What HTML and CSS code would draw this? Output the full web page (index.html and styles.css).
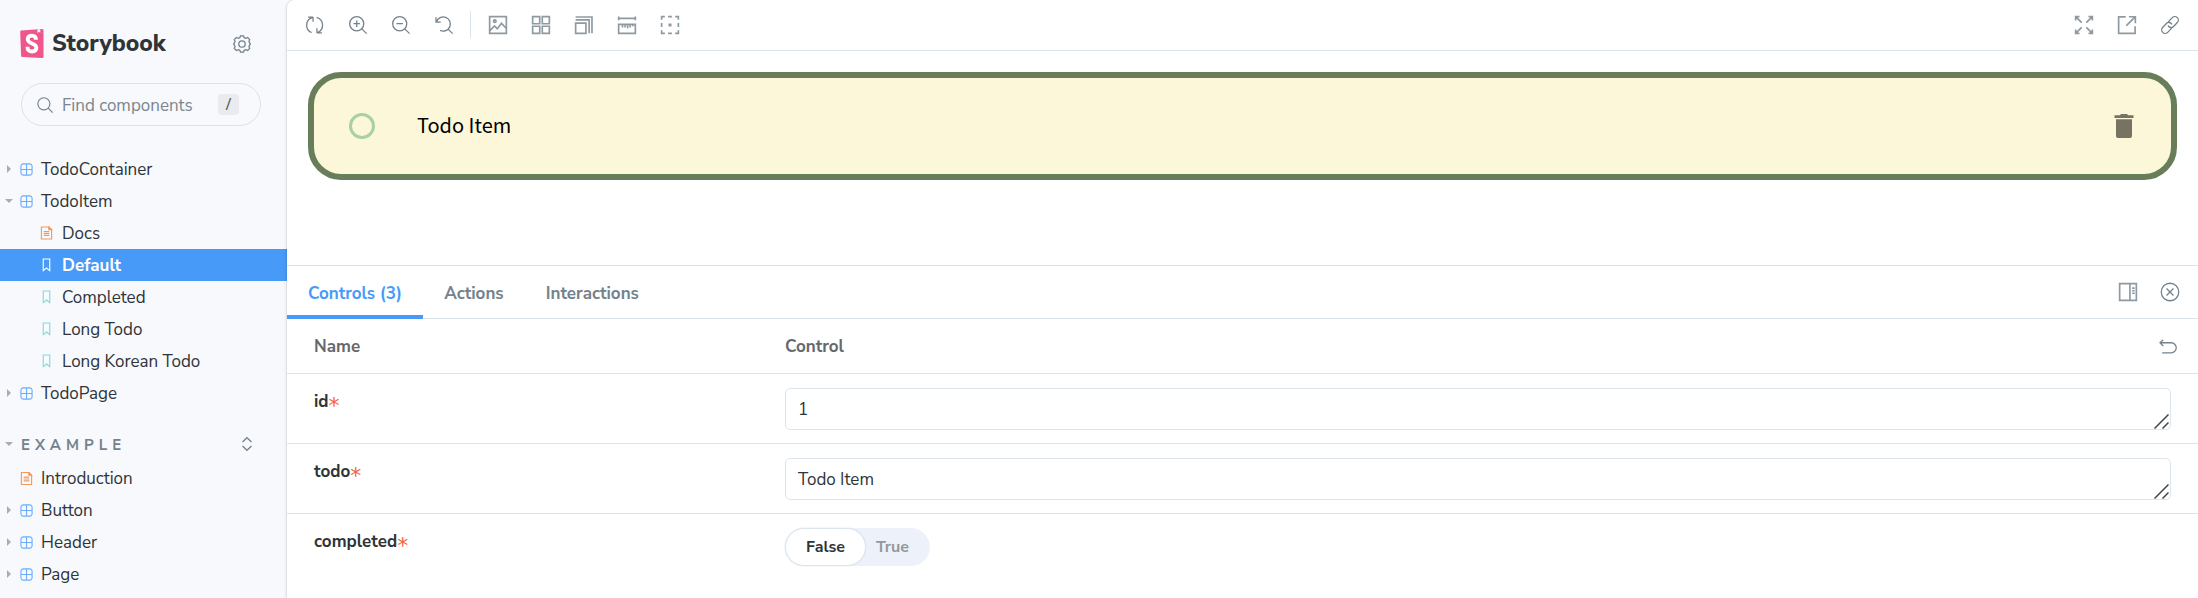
FILE: index.html
```html
<!DOCTYPE html>
<html lang="en">
<head>
<meta charset="utf-8">
<title>TodoItem - Default ⋅ Storybook</title>
<link rel="stylesheet" href="styles.css">
</head>
<body>
<svg class="sprite" aria-hidden="true">
  <symbol id="component" viewBox="0 0 14 14"><path d="M3.500 1h7A2.500 2.500 0 0 1 13 3.500v7a2.500 2.500 0 0 1-2.500 2.500h-7A2.500 2.500 0 0 1 1 10.500v-7A2.500 2.500 0 0 1 3.500 1zM7 1v12M1 7h12"/></symbol>
  <symbol id="document" viewBox="0 0 14 14"><path d="M1.500.5h8l3 3v10h-11zM4 5.500h6M4 7.500h6M4 9.500h6"/><path class="solid" d="M9.500.5l3 3h-3z"/></symbol>
  <symbol id="bookmark" viewBox="0 0 14 14"><path d="M3.500.5h7v12.500L7 10.200 3.500 13z"/></symbol>
</svg>
<div class="app">
  <aside class="sidebar">
    <header class="brand-row">
      <a class="brand" href="#">
        <svg class="brand-mark" viewBox="0 0 24 29"><path fill="#f0568a" d="M.2 2.700Q.2 1.700 1.300 1.600L22 .1Q23.500 0 23.500 1.500v26q0 1.500-1.500 1.500L2.500 28.100Q1.200 28 1.100 26.700z"/><path fill="#fff" d="M17.500.4l2.700-.2.100 3.500-1.300-1-1.600 1.200z"/><path fill="none" stroke="#fff" stroke-width="3.800" d="M16 10.800C16 8 14.700 6.700 12 6.700S7.700 8 7.700 10.300c0 4.800 8.700 3.500 8.700 8.300 0 2.400-1.600 3.900-4.300 3.900-3.200 0-4.700-1.700-4.600-4.800"/></svg>
        <span>Storybook</span>
      </a>
      <button class="icon-button" aria-label="Settings"><svg class="icon" viewBox="0 0 14 14"><circle cx="7" cy="7" r="2.500"/><path d="M5.800.6h2.400l.5 1.500 1.200.5 1.500-.7 1.600 1.700-.6 1.400.5 1.200.6.800-.6.800-.5 1.200.6 1.400-1.600 1.700-1.500-.7-1.200.5-.5 1.500H5.800l-.5-1.500-1.200-.5-1.500.7L1 10.400 1.600 9l-.5-1.200L.5 7l.6-.8L1.600 5 1 3.600l1.600-1.700 1.500.7 1.200-.5z"/></svg></button>
    </header>
    <div class="search">
      <label for="find" aria-label="Find components"><svg class="icon" viewBox="0 0 14 14"><circle cx="6" cy="6" r="5.300"/><path d="M9.800 9.800l3.900 3.900"/></svg></label>
      <input id="find" type="search" placeholder="Find components">
      <kbd>/</kbd>
    </div>
    <nav class="tree">
      <a class="node" href="#"><i class="caret"></i><svg class="type blue"><use href="#component"/></svg>TodoContainer</a>
      <a class="node" href="#"><i class="caret open"></i><svg class="type blue"><use href="#component"/></svg>TodoItem</a>
      <a class="node child" href="#"><svg class="type orange"><use href="#document"/></svg>Docs</a>
      <a class="node child selected" href="#"><svg class="type"><use href="#bookmark"/></svg>Default</a>
      <a class="node child" href="#"><svg class="type teal"><use href="#bookmark"/></svg>Completed</a>
      <a class="node child" href="#"><svg class="type teal"><use href="#bookmark"/></svg>Long Todo</a>
      <a class="node child" href="#"><svg class="type teal"><use href="#bookmark"/></svg>Long Korean Todo</a>
      <a class="node" href="#"><i class="caret"></i><svg class="type blue"><use href="#component"/></svg>TodoPage</a>
    </nav>
    <div class="group">
      <button class="group-name"><i class="caret open"></i>EXAMPLE</button>
      <button class="expand" aria-label="Expand all"><svg viewBox="0 0 14 14"><path d="M2.500 5L7 .7 11.500 5M2.500 9L7 13.300 11.500 9"/></svg></button>
    </div>
    <nav class="tree">
      <a class="node" href="#"><i class="caret none"></i><svg class="type orange"><use href="#document"/></svg>Introduction</a>
      <a class="node" href="#"><i class="caret"></i><svg class="type blue"><use href="#component"/></svg>Button</a>
      <a class="node" href="#"><i class="caret"></i><svg class="type blue"><use href="#component"/></svg>Header</a>
      <a class="node" href="#"><i class="caret"></i><svg class="type blue"><use href="#component"/></svg>Page</a>
    </nav>
  </aside>

  <main class="main">
    <div class="toolbar">
      <button class="icon-button" aria-label="Remount"><svg class="icon" viewBox="0 0 14 14"><path d="M5.500.8v3.700M5.500.8H1.600M5.300 1A6.300 6.300 0 0 0 4.300 12.900M8.500 13.200V9.500M8.500 13.200h3.900M8.700 13A6.300 6.300 0 0 0 8.300 1"/></svg></button>
      <button class="icon-button" aria-label="Zoom in"><svg class="icon" viewBox="0 0 14 14"><circle cx="6" cy="6" r="5.500"/><path d="M10 10l3.700 3.700M6 3.500v5M3.500 6h5"/></svg></button>
      <button class="icon-button" aria-label="Zoom out"><svg class="icon" viewBox="0 0 14 14"><circle cx="6" cy="6" r="5.500"/><path d="M10 10l3.700 3.700M3.500 6h5"/></svg></button>
      <button class="icon-button" aria-label="Reset zoom"><svg class="icon" viewBox="0 0 14 14"><path d="M.8 1v3.700h3.700M1.200 4.500A5.500 5.500 0 1 1 4 11.200M10 10l3.700 3.700"/></svg></button>
      <span class="divider"></span>
      <button class="icon-button bold" aria-label="Background"><svg class="icon" viewBox="0 0 14 14"><path d="M.5.5h13v13H.5zM.5 11.500l3.800-3.800 2.200 2.200 3.200-4.200 3.800 4"/><circle cx="4.500" cy="4" r="1"/></svg></button>
      <button class="icon-button bold" aria-label="Grid"><svg class="icon" viewBox="0 0 14 14"><path d="M.5.5H6V6H.5zM8 .5h5.500V6H8zM.5 8H6v5.500H.5zM8 8h5.500v5.500H8z"/></svg></button>
      <button class="icon-button bold" aria-label="Viewport"><svg class="icon" viewBox="0 0 14 14"><path d="M.5 5.500h8v8h-8zM.5 3h10.500v10.500M.5.8h12.700v12.700"/></svg></button>
      <button class="icon-button bold" aria-label="Measure"><svg class="icon" viewBox="0 0 14 14"><path d="M.5 1.800h13M.5.3v3M13.500.3v3M.5 6.500h13v7H.5zM3.500 6.500v2.500M5.500 6.500V9M7.500 6.500v3M9.500 6.500V9M11.500 6.500V8"/></svg></button>
      <button class="icon-button bold" aria-label="Outline"><svg class="icon" viewBox="0 0 14 14"><path d="M.5 3V.5H3M5.500.5h3M11 .5h2.500V3M13.500 5.500v3M13.500 11v2.500H11M8.500 13.500h-3M3 13.500H.5V11M.5 8.500v-3"/><path class="solid" d="M6.500 6.500h1v1h-1z"/></svg></button>
      <span class="spacer"></span>
      <button class="icon-button bold" aria-label="Full screen"><svg class="icon" viewBox="0 0 14 14"><path d="M.5 3.500v-3h3M.5.5l4.700 4.700M10.500.5h3v3M13.500.5L8.800 5.200M13.500 10.500v3h-3M13.500 13.500L8.800 8.800M3.500 13.500h-3v-3M.5 13.500l4.700-4.700"/></svg></button>
      <button class="icon-button bold" aria-label="Open in new tab"><svg class="icon" viewBox="0 0 14 14"><path d="M6 .7H.5v12.800h12.800V8M8.500.6h5v5M13.300.7L6.500 7.500"/></svg></button>
      <button class="icon-button" aria-label="Copy link"><svg class="icon" viewBox="0 0 14 14"><path d="M5.500 4.800l3.300-3.500a2.700 2.700 0 0 1 3.900 3.800L9.800 8.200a2.700 2.700 0 0 1-4.300-.7M8.500 9.200l-3.300 3.500a2.700 2.700 0 0 1-3.900-3.800l2.900-3.100a2.700 2.700 0 0 1 4.300.7"/></svg></button>
    </div>

    <section class="canvas">
      <article class="todo">
        <button class="check" aria-label="Complete"></button>
        <span class="todo-text">Todo Item</span>
        <button class="delete" aria-label="Delete"><svg viewBox="0 0 20 24"><path d="M.5 1.200h5.400L7 0h6l1.100 1.200h5.400V4H.5zM2 5.200h16v16.200Q18 24 15.400 24H4.600Q2 24 2 21.400z"/></svg></button>
      </article>
    </section>

    <section class="panel">
      <div class="tabs">
        <button class="tab active">Controls (3)</button>
        <button class="tab">Actions</button>
        <button class="tab">Interactions</button>
        <span class="spacer"></span>
        <button class="icon-button bold" aria-label="Change orientation"><svg class="icon" viewBox="0 0 14 14"><path d="M.5.5h13v13H.5zM8.500.5v13M10.200 4h2M10.200 6h2M10.200 8h2"/></svg></button>
        <button class="icon-button" aria-label="Hide addons"><svg class="icon" viewBox="0 0 14 14"><circle cx="7" cy="7" r="6.800"/><path d="M4.300 4.300l5.400 5.400M9.700 4.300L4.300 9.700"/></svg></button>
      </div>
      <table class="args">
        <thead>
          <tr><th>Name</th><th><div class="head">Control<button class="icon-button" aria-label="Reset controls"><svg class="icon" viewBox="0 0 14 14"><path d="M3.300 1.400L.8 3.700l2.500 2.500M1 3.700h8.500a3.900 3.900 0 0 1 0 7.800H2.500"/></svg></button></div></th></tr>
        </thead>
        <tbody>
          <tr><td><label for="id">id<span class="required">*</span></label></td>
            <td><div class="field"><textarea id="id" rows="1">1</textarea><svg class="grip" viewBox="0 0 15 15"><path d="M.5 14.500l14-14M8.500 14.500l6-6"/></svg></div></td></tr>
          <tr><td><label for="todo">todo<span class="required">*</span></label></td>
            <td><div class="field"><textarea id="todo" rows="1">Todo Item</textarea><svg class="grip" viewBox="0 0 15 15"><path d="M.5 14.500l14-14M8.500 14.500l6-6"/></svg></div></td></tr>
          <tr><td><label for="completed">completed<span class="required">*</span></label></td>
            <td><label class="toggle"><input id="completed" type="checkbox"><span class="off">False</span><span class="on">True</span></label></td></tr>
        </tbody>
      </table>
    </section>
  </main>
</div>
</body>
</html>
```
FILE: styles.css
```css
* { box-sizing: border-box; }
body {
  margin: 0;
  color: #2e3438;
  background: #f7f9fd;
  font: 17px/20px "Nunito Sans", Nunito, Lato, "Open Sans", sans-serif;
}
button, input, textarea { font: inherit; color: inherit; }
button { padding: 0; border: 0; background: none; }
a { color: inherit; text-decoration: none; }
svg { display: block; flex: none; fill: none; stroke: currentColor; }
.sprite { position: absolute; width: 0; height: 0; }
.solid { fill: currentColor; }
.spacer { flex: 1; }

.app { display: flex; height: 100vh; overflow: hidden; background: #f7f9fd; }

.sidebar { flex: none; width: 287px; }
.brand-row { display: flex; align-items: center; justify-content: space-between; padding: 28px 35px 0 20px; height: 59px; }
.brand { display: flex; align-items: center; gap: 8px; font-size: 23px; font-weight: 800; line-height: 30px; }
.brand-mark { width: 24px; height: 29px; stroke: none; }
.icon-button { display: flex; align-items: center; justify-content: center; color: #73828c; width: 20px; height: 32px; }
.icon { width: 18px; height: 18px; overflow: visible; }
.bold .icon { opacity: 0.8; stroke-width: 1.300; }

.search {
  display: flex; align-items: center; gap: 8px;
  height: 43px; margin: 24px 26px 27px 21px; padding: 0 21px 0 15px;
  border: 1px solid #dbe2e8; border-radius: 22px; color: #73828c;
}
.search .icon { width: 16px; height: 16px; }
.search input { flex: 1; min-width: 0; padding: 2px 0 0 1px; border: 0; outline: 0; background: none; }
.search input::placeholder { color: #7b868e; opacity: 1; }
kbd { width: 21px; height: 21px; border-radius: 4px; background: #e9ebef; color: #50565a; font: 16px/21px "Open Sans", sans-serif; text-align: center; }

.node { display: flex; align-items: center; height: 32px; padding: 2px 0 0 7px; }
.child { padding-left: 40px; }
.caret { flex: none; width: 13px; padding-bottom: 2px; }
.caret::before { content: ""; display: block; width: 0; border: 4px solid transparent; border-left-color: #a7adb3; border-right-width: 0; }
.caret.open::before { border: 4px solid transparent; border-top-color: #a7adb3; border-bottom-width: 0; margin-left: -2px; }
.caret.none::before { border-color: transparent; }
.type { width: 13px; height: 13px; margin: 0 8px 2px 0; overflow: visible; stroke-width: 1.200; }
.child .type { height: 14px; margin-right: 9px; }
.blue { color: #6aaefb; }
.orange { color: #f39a56; }
.teal { color: #7edcd9; }
.selected { background: #479af7; color: #fff; font-weight: 700; }

.group { display: flex; align-items: center; justify-content: space-between; height: 32px; margin: 19px 33px 2px 7px; color: #73828c; }
.group-name { display: flex; align-items: center; font-size: 15px; font-weight: 700; letter-spacing: 5px; padding-top: 2px; }
.group-name .caret { width: 14px; }
.expand svg { width: 14px; height: 14px; stroke-width: 1.300; }

.main {
  display: flex; flex-direction: column; flex: 1; min-width: 0;
  background: #fff; border-top-left-radius: 8px;
  box-shadow: 0 0 0 1px rgba(0, 0, 0, 0.06), 0 1px 5px rgba(0, 0, 0, 0.1);
}
.toolbar { display: flex; flex: none; align-items: center; gap: 23px; height: 51px; padding: 0 18px 1px; border-bottom: 1px solid #dce5eb; }
.divider { width: 1px; height: 27px; margin: 0 -7px; background: #dce5eb; }
.toolbar .divider + .icon-button { margin-left: 1px; }

.canvas { flex: none; height: 214px; padding: 21px; }
.todo { display: flex; align-items: center; height: 108px; padding: 0 37px 0 35px; border: 6px solid #687d5a; border-radius: 33px; background: #fdf7da; }
.check { width: 26px; height: 26px; border: 3px solid #a8cfa5; border-radius: 50%; }
.todo-text { flex: 1; margin-left: 42px; padding-bottom: 2px; color: #000; font: 20px/28px "Noto Sans CJK KR", sans-serif; }
.delete svg { width: 20px; height: 24px; fill: #767363; stroke: none; }

.panel { flex: 1; border-top: 1px solid #dce2e7; }
.tabs { display: flex; align-items: center; gap: 22px; height: 53px; padding-right: 18px; border-bottom: 1px solid #dce5eb; }
.tab { align-self: stretch; height: 53px; padding: 2px 21px 0 21px; margin-right: -22px; border-bottom: 4px solid transparent; border-top: 4px solid transparent; color: #73828c; font-weight: 700; }
.active { border-bottom-color: #479af7; color: #479af7; }

.args { width: 100%; border-collapse: collapse; table-layout: fixed; }
.args th { height: 54px; padding: 2px 20px 0 27px; border-bottom: 1px solid #dfe4e8; color: #66696c; text-align: left; font-weight: 700; }
.args th:first-child { width: 471px; }
.head { display: flex; align-items: center; justify-content: space-between; }
.args td { height: 70px; padding: 14px 27px 13px; vertical-align: top; border-bottom: 1px solid #dfe4e8; }
.args tr:last-child td { border: 0; }
.args td:first-child { padding-top: 18px; font-weight: 700; }
.required { display: inline-block; height: 12px; padding-top: 4px; color: #f6623b; font: 22px/20px "DejaVu Sans", sans-serif; vertical-align: top; }
.field { position: relative; }
.field textarea { display: block; width: 100%; height: 42px; padding: 11px 12px 9px; border: 1px solid #dce5eb; border-radius: 5px; resize: none; overflow: hidden; outline: 0; background: #fff; }
.grip { position: absolute; right: 2px; bottom: 1px; width: 15px; height: 15px; color: #444; stroke-width: 1.500; }
.toggle { display: inline-flex; height: 38px; border-radius: 19px; background: #edf2fa; font-size: 16px; font-weight: 700; line-height: 36px; }
.toggle input { position: absolute; opacity: 0; }
.off { padding: 0 20px; border: 1px solid #dae5ee; border-radius: 19px; background: #fff; box-shadow: 0 0 2px #dae5ee; }
.on { padding: 1px 21px 1px 10px; color: #94989c; }
```
